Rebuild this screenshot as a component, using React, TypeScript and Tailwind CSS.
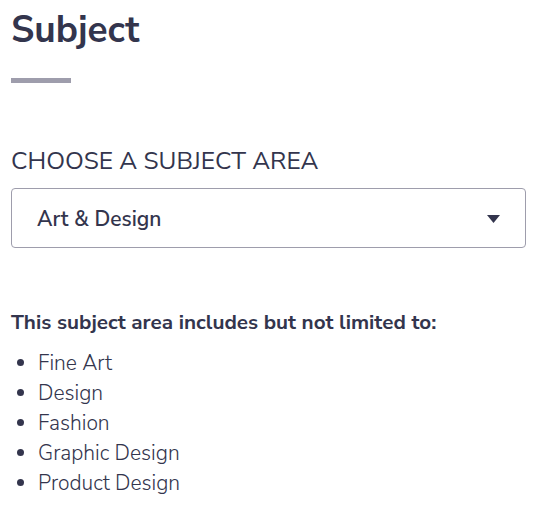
const AREAS = ['Fine Art', 'Design', 'Fashion', 'Graphic Design', 'Product Design'];

export default function App() {
  return (
    <div
      className="min-h-screen bg-white px-[11px] pt-[7px] text-[#33354d]"
      style={{ fontFamily: '"Nunito Sans", Lato, sans-serif' }}
    >
      <h1 className="text-[37px] font-bold leading-[46px]">Subject</h1>
      <div className="mt-[25px] h-[5px] w-[60px] bg-[#9e9dac]" />

      <h2 className="mt-[64px] text-[24.5px] font-normal uppercase leading-[28px]">
        Choose a subject area
      </h2>

      <div className="mt-[13px] flex h-[60px] w-[515px] items-center justify-between rounded border border-[#9e9dac] pl-[25px] pr-[25px]">
        <span className="pt-[4px] text-[21px] font-semibold">Art &amp; Design</span>
        <svg width="13" height="8" viewBox="0 0 13 8" className="mt-[2px] fill-[#33354d]">
          <path d="M0 0h13L6.5 8z" />
        </svg>
      </div>

      <p className="mt-[61px] text-[20.7px] font-bold leading-[26px]">
        This subject area includes but not limited to:
      </p>
      <ul className="mt-[13px] list-disc pl-[27px] text-[21px] font-light leading-[30px] marker:text-[#33354d]">
        {AREAS.map(a => (
          <li key={a}>{a}</li>
        ))}
      </ul>
    </div>
  );
}
